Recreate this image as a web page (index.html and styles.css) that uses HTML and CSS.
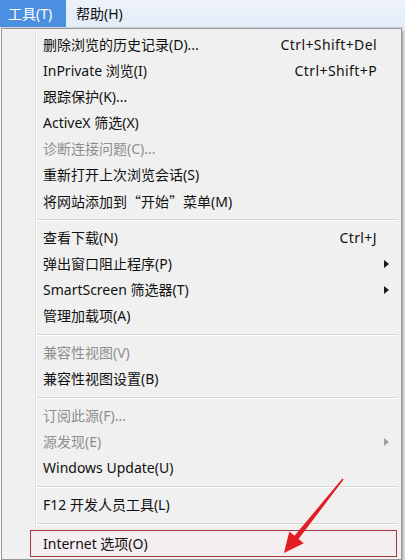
FILE: index.html
```html
<!DOCTYPE html>
<html lang="zh-CN">
<head>
<meta charset="utf-8">
<title>工具菜单</title>
<link rel="stylesheet" href="styles.css">
</head>
<body>
<div class="menubar">
  <div class="mb-item active">工具(T)</div>
  <div class="mb-item">帮助(H)</div>
</div>
<div class="menu">
  <div class="item"><span class="label">删除浏览的历史记录(D)...</span><span class="key">Ctrl+Shift+Del</span><span class="sub"></span></div>
  <div class="item"><span class="label">InPrivate 浏览(I)</span><span class="key">Ctrl+Shift+P</span><span class="sub"></span></div>
  <div class="item"><span class="label">跟踪保护(K)...</span><span class="sub"></span></div>
  <div class="item"><span class="label">ActiveX 筛选(X)</span><span class="sub"></span></div>
  <div class="item disabled"><span class="label">诊断连接问题(C)...</span><span class="sub"></span></div>
  <div class="item"><span class="label">重新打开上次浏览会话(S)</span><span class="sub"></span></div>
  <div class="item"><span class="label">将网站添加到<span class="cjk">“开始”</span>菜单(M)</span><span class="sub"></span></div>
  <div class="sep"></div>
  <div class="item"><span class="label">查看下载(N)</span><span class="key">Ctrl+J</span><span class="sub"></span></div>
  <div class="item"><span class="label">弹出窗口阻止程序(P)</span><span class="sub"><i class="tri"></i></span></div>
  <div class="item"><span class="label">SmartScreen 筛选器(T)</span><span class="sub"><i class="tri"></i></span></div>
  <div class="item"><span class="label">管理加载项(A)</span><span class="sub"></span></div>
  <div class="sep"></div>
  <div class="item disabled"><span class="label">兼容性视图(V)</span><span class="sub"></span></div>
  <div class="item"><span class="label">兼容性视图设置(B)</span><span class="sub"></span></div>
  <div class="sep"></div>
  <div class="item disabled"><span class="label">订阅此源(F)...</span><span class="sub"></span></div>
  <div class="item disabled"><span class="label">源发现(E)</span><span class="sub"><i class="tri light"></i></span></div>
  <div class="item"><span class="label">Windows Update(U)</span><span class="sub"></span></div>
  <div class="sep"></div>
  <div class="item"><span class="label">F12 开发人员工具(L)</span><span class="sub"></span></div>
  <div class="sep"></div>
  <div class="item marked"><span class="label">Internet 选项(O)</span><span class="sub"></span></div>
</div>
<svg class="arrow" width="405" height="560" viewBox="0 0 405 560">
  <polygon fill="#e31b22" points="342.4,478.5 294.5,535.8 289.3,531.6 284,553 303.7,543.2 298.5,539 343.6,479.5"/>
</svg>
</body>
</html>
```
FILE: styles.css
```css
html, body {
  margin: 0;
  padding: 0;
  background: #ffffff;
}
body {
  width: 405px;
  height: 560px;
  overflow: hidden;
  position: relative;
  font-family: "Noto Sans", "Noto Sans CJK SC", sans-serif;
  font-size: 14px;
  color: #111111;
}
.cjk {
  font-family: "Noto Sans CJK SC", sans-serif;
}
.menubar {
  height: 27px;
  display: flex;
  align-items: stretch;
  background: linear-gradient(#eef3fa, #e2ebf7);
  border-bottom: 1px solid #cdd7e4;
}
.mb-item {
  display: flex;
  align-items: center;
  padding: 0 10px;
  line-height: 1;
}
.mb-item.active {
  width: 66px;
  box-sizing: border-box;
  padding: 0 8px;
  background: #4a8fe0;
  color: #ffffff;
}
.menu {
  margin-left: 1px;
  width: 401px;
  box-sizing: border-box;
  border: 1px solid #979797;
  padding: 3px 0 2px 0;
  background:
    linear-gradient(to right, transparent 33px, #e2e2e2 33px, #e2e2e2 34px, #ffffff 34px, #ffffff 35px, transparent 35px),
    #f0f0f0;
  box-shadow: 2px 2px 3px rgba(0, 0, 0, 0.35);
}
.item {
  height: 26px;
  display: flex;
  align-items: center;
  padding-left: 41px;
  line-height: 1;
  white-space: nowrap;
}
.item .label {
  flex: 1;
}
.item .key {
  text-align: right;
  letter-spacing: 0.4px;
}
.item .sub {
  width: 24px;
  display: flex;
  align-items: center;
  padding-left: 7px;
  box-sizing: border-box;
}
.tri {
  display: block;
  width: 0;
  height: 0;
  border-top: 4px solid transparent;
  border-bottom: 4px solid transparent;
  border-left: 5px solid #1c1c1c;
}
.tri.light {
  border-left-color: #a0a0a0;
}
.item.disabled {
  color: #8e8e8e;
}
.sep {
  height: 11px;
  box-sizing: border-box;
  padding: 5px 3px 0 35px;
}
.sep::before {
  content: "";
  display: block;
  height: 0;
  border-top: 1px solid #d6d6d6;
  border-bottom: 1px solid #ffffff;
}
.item.marked {
  margin: 1px 4px 0 28px;
  height: 27px;
  box-sizing: border-box;
  padding-left: 12px;
  border: 1px solid #a5373c;
  background: #f4eef1;
}
.arrow {
  position: absolute;
  left: 0;
  top: 0;
  pointer-events: none;
}
```
